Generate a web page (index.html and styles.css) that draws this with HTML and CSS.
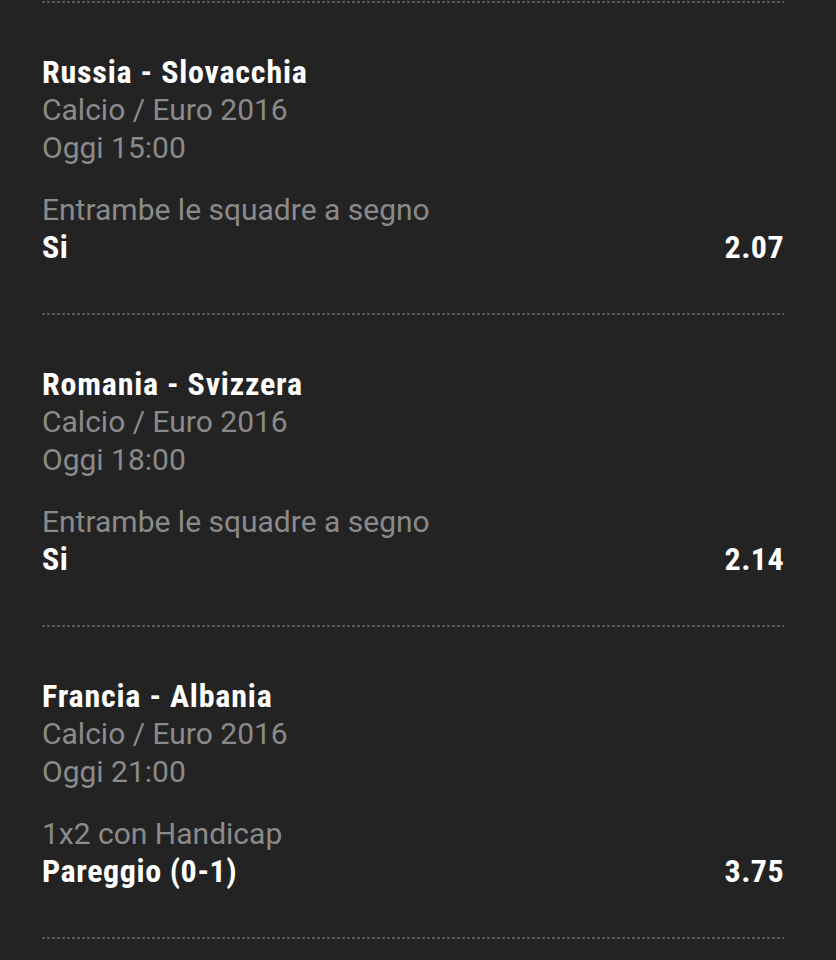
FILE: index.html
```html
<!DOCTYPE html>
<html lang="it">

<head>
    <meta charset="UTF-8">
    <meta name="viewport" content="width=device-width, initial-scale=1.0">
    <title>Scommesse</title>
    <link rel="stylesheet" href="styles.css">
</head>

<body>
    <ul class="bets">
        <li class="bet">
            <div class="match">Russia - Slovacchia</div>
            <div class="info">Calcio / Euro 2016</div>
            <div class="info">Oggi 15:00</div>
            <div class="market">Entrambe le squadre a segno</div>
            <div class="pick">
                <span>Si</span>
                <span class="odds">2.07</span>
            </div>
        </li>
        <li class="bet">
            <div class="match">Romania - Svizzera</div>
            <div class="info">Calcio / Euro 2016</div>
            <div class="info">Oggi 18:00</div>
            <div class="market">Entrambe le squadre a segno</div>
            <div class="pick">
                <span>Si</span>
                <span class="odds">2.14</span>
            </div>
        </li>
        <li class="bet">
            <div class="match">Francia - Albania</div>
            <div class="info">Calcio / Euro 2016</div>
            <div class="info">Oggi 21:00</div>
            <div class="market">1x2 con Handicap</div>
            <div class="pick">
                <span>Pareggio (0-1)</span>
                <span class="odds">3.75</span>
            </div>
        </li>
    </ul>
</body>

</html>
```

FILE: styles.css
```css
* {
    margin: 0;
    padding: 0;
}

body {
    background-color: #232323;
    font-family: Roboto, "Liberation Sans", sans-serif;
    height: 960px;
    overflow: hidden;
}

.bets {
    list-style: none;
    margin: 0 52px 0 42px;
    padding-top: 1px;
}

/* riga tratteggiata sopra ogni scommessa */
.bet {
    padding: 52px 0 48px;
    background-image: repeating-linear-gradient(to right, #575757 0, #575757 3px, transparent 3px, transparent 5px);
    background-size: 100% 2px;
    background-repeat: no-repeat;
    background-position: left top;
}

/* ultima riga sotto l'ultima scommessa */
.bets::after {
    content: "";
    display: block;
    height: 2px;
    background-image: repeating-linear-gradient(to right, #575757 0, #575757 3px, transparent 3px, transparent 5px);
}

.match {
    color: #fff;
    font-size: 32px;
    font-weight: bold;
    font-stretch: condensed;
    letter-spacing: 0.8px;
    line-height: 38px;
}

.info {
    color: #8a8a8a;
    font-size: 30px;
    line-height: 38px;
}

.market {
    color: #8a8a8a;
    font-size: 30px;
    line-height: 38px;
    margin-top: 24px;
}

.pick {
    display: flex;
    justify-content: space-between;
    color: #fff;
    font-size: 32px;
    font-weight: bold;
    font-stretch: condensed;
    letter-spacing: 0.6px;
    line-height: 36px;
}

.odds {
    letter-spacing: 0.4px;
}
```
